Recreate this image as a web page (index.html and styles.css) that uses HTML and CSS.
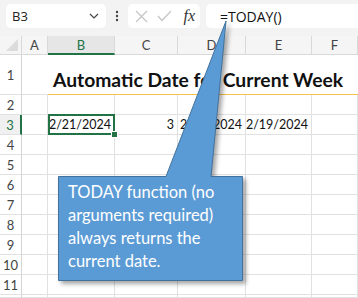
FILE: index.html
```html
<!DOCTYPE html>
<html lang="en">
<head>
    <meta charset="UTF-8">
    <title>TODAY function</title>
    <link rel="stylesheet" href="styles.css">
</head>
<body>

    <div class="toolbar">
        <div class="name-box">
            <span>B3</span>
            <svg width="10" height="6" viewBox="0 0 10 6"><path d="M1 1 L5 5 L9 1" fill="none" stroke="#444" stroke-width="1.2"/></svg>
        </div>
        <div class="dots">
            <svg width="4" height="12" viewBox="0 0 4 12"><circle cx="2" cy="2" r="1.2" fill="#444"/><circle cx="2" cy="6" r="1.2" fill="#444"/><circle cx="2" cy="10" r="1.2" fill="#444"/></svg>
        </div>
        <div class="fx-tools">
            <svg width="13" height="13" viewBox="0 0 13 13"><path d="M1 1 L12 12 M12 1 L1 12" stroke="#c4c4c4" stroke-width="1.2"/></svg>
            <svg width="15" height="12" viewBox="0 0 15 12"><path d="M1 6 L5 10.5 L14 1" fill="none" stroke="#c4c4c4" stroke-width="1.2"/></svg>
            <span class="fx">fx</span>
        </div>
        <div class="formula">=TODAY()</div>
    </div>

    <div class="sheet">
        <div class="row head">
            <div class="corner"><svg width="14" height="14" viewBox="0 0 14 14"><path d="M13 1 L13 13 L1 13 Z" fill="#dcdcdc"/></svg></div>
            <div>A</div>
            <div class="active">B</div>
            <div>C</div>
            <div>D</div>
            <div>E</div>
            <div>F</div>
        </div>
        <div class="row title-row">
            <div class="num">1</div>
            <div class="plain"></div>
            <div class="title">Automatic Date for Current Week</div>
        </div>
        <div class="row">
            <div class="num">2</div><div></div><div></div><div></div><div></div><div></div><div></div>
        </div>
        <div class="row">
            <div class="num current">3</div><div></div>
            <div class="val selected">2/21/2024</div>
            <div class="val">3</div>
            <div class="val">2/18/2024</div>
            <div class="val">2/19/2024</div>
            <div></div>
        </div>
        <div class="row"><div class="num">4</div><div></div><div></div><div></div><div></div><div></div><div></div></div>
        <div class="row"><div class="num">5</div><div></div><div></div><div></div><div></div><div></div><div></div></div>
        <div class="row"><div class="num">6</div><div></div><div></div><div></div><div></div><div></div><div></div></div>
        <div class="row"><div class="num">7</div><div></div><div></div><div></div><div></div><div></div><div></div></div>
        <div class="row"><div class="num">8</div><div></div><div></div><div></div><div></div><div></div><div></div></div>
        <div class="row"><div class="num">9</div><div></div><div></div><div></div><div></div><div></div><div></div></div>
        <div class="row"><div class="num">10</div><div></div><div></div><div></div><div></div><div></div><div></div></div>
        <div class="row"><div class="num">11</div><div></div><div></div><div></div><div></div><div></div><div></div></div>
        <div class="row short"><div class="num"></div><div></div><div></div><div></div><div></div><div></div><div></div></div>
    </div>

    <!-- callout pointing at the formula bar -->
    <svg class="callout-shape" width="358" height="298" viewBox="0 0 358 298">
        <path d="M58.5 176.5 L166 176.5 L226 21 L211 176.5 L242.5 176.5 L242.5 280.5 L58.5 280.5 Z" fill="#5b9bd5" stroke="#41719c" stroke-width="1"/>
    </svg>
    <div class="callout-text">TODAY function (no arguments required) always returns the current date.</div>

</body>
</html>
```
FILE: styles.css
```css
body {
    margin: 0;
    width: 358px;
    height: 298px;
    overflow: hidden;
    position: relative;
    background: #fff;
    font-family: Lato, "Open Sans", sans-serif;
}
.toolbar {
    height: 36px;
    box-sizing: border-box;
    background: #f3f3f3;
    display: flex;
    align-items: flex-start;
    padding: 4px 0 0 6px;
}
.toolbar > div {
    flex-shrink: 0;
}
.name-box, .fx-tools, .formula {
    height: 24px;
    box-sizing: border-box;
    background: #fff;
    border-radius: 5px;
    display: flex;
    align-items: center;
}
.name-box {
    width: 100px;
    justify-content: space-between;
    padding: 0 7px 0 6px;
    font-family: "Open Sans", sans-serif;
    font-size: 13px;
    color: #222;
}
.dots {
    width: 22px;
    height: 24px;
    display: flex;
    align-items: center;
    justify-content: center;
}
.fx-tools {
    width: 72px;
    padding: 0 5px 0 7px;
    gap: 9px;
}
.fx {
    margin-left: auto;
    font-family: "Liberation Serif", serif;
    font-style: italic;
    font-size: 16px;
    color: #333;
}
.formula {
    width: 152px;
    margin-left: 6px;
    padding-left: 14px;
    border-radius: 5px 0 0 5px;
    font-family: "Open Sans", sans-serif;
    font-size: 14px;
    color: #111;
}
.row {
    display: grid;
    grid-template-columns: 22px 26px 67px 63px 68px 66px 46px;
    height: 20px;
}
.row.short {
    height: 3px;
}
.row > div {
    box-sizing: border-box;
    border-right: 1px solid #e1e1e1;
    border-bottom: 1px solid #e1e1e1;
}
.head {
    height: 19px;
    background: #f5f5f5;
}
.head > div {
    display: flex;
    align-items: center;
    justify-content: center;
    font-size: 13px;
    color: #444;
    border-right-color: #d9d9d9;
    border-bottom-color: #d9d9d9;
}
.head .corner {
    justify-content: flex-end;
    align-items: flex-end;
    padding: 0 2px 2px 0;
}
.head .active {
    background: #e6e6e6;
    color: #217346;
    border-bottom: 2px solid #217346;
}
.row .num {
    display: flex;
    align-items: center;
    justify-content: center;
    font-size: 13px;
    color: #444;
    border-right-color: #d4d4d4;
}
.row .current {
    color: #217346;
    background: #f0f0f0;
    border-right: 2px solid #217346;
}
.title-row {
    height: 40px;
}
.title-row .plain {
    border-right: none;
}
.title {
    grid-column: 3 / 8;
    display: flex;
    align-items: flex-end;
    padding: 0 0 3px 5px;
    font-size: 19.3px;
    font-weight: bold;
    color: #111;
    white-space: nowrap;
    border-right: none !important;
    border-bottom: 1px solid #f4c24a !important;
}
.val {
    display: flex;
    align-items: flex-end;
    justify-content: flex-end;
    padding: 0 3px 2px 0;
    font-size: 12.5px;
    color: #111;
}
.selected {
    position: relative;
}
.selected::after {
    content: "";
    position: absolute;
    top: -1px;
    left: 0;
    right: -1px;
    bottom: -1px;
    border: 2px solid #217346;
}
.selected::before {
    content: "";
    position: absolute;
    right: -4px;
    bottom: -4px;
    width: 5px;
    height: 5px;
    background: #217346;
    border: 1px solid #fff;
    z-index: 1;
}
.callout-shape {
    position: absolute;
    left: 0;
    top: 0;
    filter: drop-shadow(3px 3px 2px rgba(0, 0, 0, 0.35));
}
.callout-text {
    position: absolute;
    left: 68px;
    top: 181px;
    width: 170px;
    font-size: 16.5px;
    line-height: 23px;
    color: #fff;
}
```
